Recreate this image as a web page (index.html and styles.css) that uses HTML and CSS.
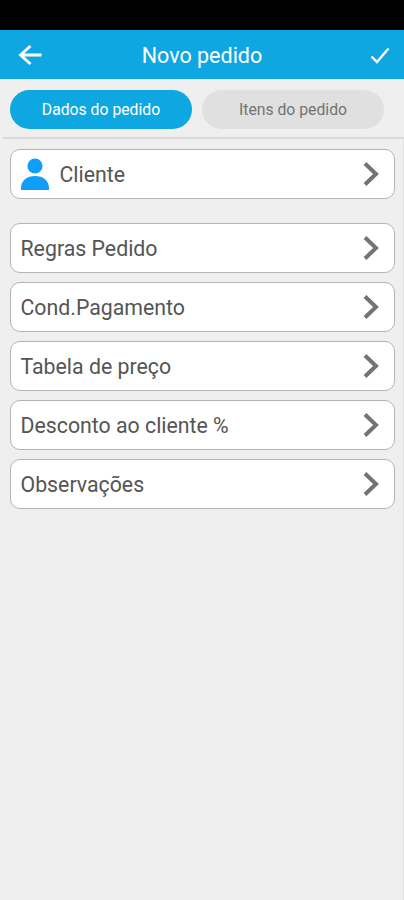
FILE: index.html
```html
<!DOCTYPE html>
<html lang="pt-BR">
<head>
    <meta charset="UTF-8">
    <meta name="viewport" content="width=device-width, initial-scale=1.0">
    <title>Novo pedido</title>
    <link rel="stylesheet" href="styles.css">
</head>
<body>
    <div class="status-bar"></div>
    <header class="toolbar">
        <svg class="back" viewBox="0 0 24 20" width="24" height="20">
            <path d="M23.500 10H3M12.500 1L2.500 10l10 9"/>
        </svg>
        <h1>Novo pedido</h1>
        <svg class="check" viewBox="0 0 20 17" width="20" height="17">
            <path d="M1.500 9.500L7 15L18.500 1.500"/>
        </svg>
    </header>

    <nav class="tabs">
        <button class="tab active">Dados do pedido</button>
        <button class="tab">Itens do pedido</button>
    </nav>

    <main class="list">
        <div class="item client">
            <svg class="person" viewBox="0 0 28 32" width="28" height="32">
                <circle cx="14" cy="8" r="7.600"/>
                <path d="M0 32V30C0 22.500 6 18 14 18s14 4.500 14 12v2z"/>
            </svg>
            <span>Cliente</span>
            <svg class="arrow" viewBox="0 0 16 24" width="16" height="24"><path d="M2 1.500L13 12L2 22.500"/></svg>
        </div>
        <div class="item">
            <span>Regras Pedido</span>
            <svg class="arrow" viewBox="0 0 16 24" width="16" height="24"><path d="M2 1.500L13 12L2 22.500"/></svg>
        </div>
        <div class="item">
            <span>Cond.Pagamento</span>
            <svg class="arrow" viewBox="0 0 16 24" width="16" height="24"><path d="M2 1.500L13 12L2 22.500"/></svg>
        </div>
        <div class="item">
            <span>Tabela de preço</span>
            <svg class="arrow" viewBox="0 0 16 24" width="16" height="24"><path d="M2 1.500L13 12L2 22.500"/></svg>
        </div>
        <div class="item">
            <span>Desconto ao cliente %</span>
            <svg class="arrow" viewBox="0 0 16 24" width="16" height="24"><path d="M2 1.500L13 12L2 22.500"/></svg>
        </div>
        <div class="item">
            <span>Observações</span>
            <svg class="arrow" viewBox="0 0 16 24" width="16" height="24"><path d="M2 1.500L13 12L2 22.500"/></svg>
        </div>
    </main>
</body>
</html>
```
FILE: styles.css
```css
* {
    box-sizing: border-box;
}

body {
    font-family: Roboto, "Liberation Sans", sans-serif;
    background-color: #efefef;
    color: #555555;
    margin: 0;
    min-height: 100vh;
}

svg {
    display: block;
    flex-shrink: 0;
}

.status-bar {
    height: 30px;
    background-color: #000000;
}

.toolbar {
    display: flex;
    align-items: center;
    height: 49px;
    padding: 1px 14px 0 18px;
    background-color: #0fa7e2;
    color: #FFFFFF;
}

.toolbar h1 {
    flex: 1;
    margin: 0 8px 0 0;
    font-size: 21.5px;
    font-weight: 400;
    text-align: center;
}

.back,
.check {
    fill: none;
    stroke: #FFFFFF;
    stroke-width: 2.8;
}

.check {
    stroke-width: 2.4;
}

.tabs {
    display: flex;
    gap: 10px;
    height: 60px;
    margin-left: 3px;
    padding: 11px 0 0 7px;
    border-bottom: 2px solid #dadada;
}

.tab {
    width: 182px;
    height: 39px;
    padding: 0;
    border: none;
    border-radius: 20px;
    font-family: inherit;
    font-size: 15.75px;
    background-color: #e0e0e0;
    color: #737373;
}

.tab.active {
    background-color: #0fa7e2;
    color: #FFFFFF;
}

.list {
    display: flex;
    flex-direction: column;
    gap: 9px;
    padding: 10px 9px 0 10px;
    border-right: 1px solid #e4e4e4;
}

.list {
    min-height: calc(100vh - 139px);
    padding-right: 8px;
}

.item {
    display: flex;
    align-items: center;
    height: 50px;
    padding: 0 15px 0 9.500px;
    border: 1px solid #b4b4b4;
    border-radius: 10px;
    background-color: #FFFFFF;
    font-size: 21.3px;
}

.client {
    margin-bottom: 15px;
}

.person {
    margin-right: 11px;
    fill: #0f9ffb;
}

.arrow {
    margin-left: auto;
    fill: none;
    stroke: #737373;
    stroke-width: 4;
}
```
